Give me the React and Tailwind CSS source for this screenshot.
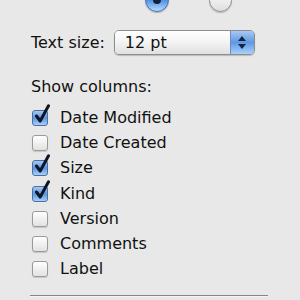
const columns = [
  { label: 'Date Modified', checked: true },
  { label: 'Date Created', checked: false },
  { label: 'Size', checked: true },
  { label: 'Kind', checked: true },
  { label: 'Version', checked: false },
  { label: 'Comments', checked: false },
  { label: 'Label', checked: false },
];

const Radio = ({ selected }) =>
  selected ? (
    <div className="w-[24px] h-[24px] rounded-full border border-[#3f6fae] bg-gradient-to-b from-[#8fb8ee] via-[#4f8ee0] to-[#b7dcff] flex items-center justify-center shadow-[0_1px_1px_rgba(0,0,0,0.25)]">
      <div className="w-[8px] h-[8px] rounded-full bg-[#12213a]" />
    </div>
  ) : (
    <div className="w-[23px] h-[23px] rounded-full border border-[#8c8c8c] bg-gradient-to-b from-[#ffffff] to-[#dedede] shadow-[0_1px_1px_rgba(0,0,0,0.2)]" />
  );

const Checkbox = ({ checked }) => (
  <div className="relative w-[16px] h-[16px]">
    {checked ? (
      <div className="w-[16px] h-[16px] rounded-[3px] border border-[#4a6fa3] bg-gradient-to-b from-[#a9c9f2] via-[#5d95de] to-[#a8d0fb]" />
    ) : (
      <div className="w-[16px] h-[16px] rounded-[3px] border border-[#9a9a9a] bg-gradient-to-b from-[#ffffff] to-[#e2e2e2] shadow-[0_1px_1px_rgba(0,0,0,0.15)]" />
    )}
    {checked && (
      <svg className="absolute left-[2px] top-[-6px]" width="17" height="21" viewBox="0 0 17 21">
        <path d="M2.5 12 L6.2 17 L14.5 1.8" fill="none" stroke="#0d1626" strokeWidth="3" strokeLinecap="round" strokeLinejoin="round" />
      </svg>
    )}
  </div>
);

export default function App() {
  return (
    <div className="w-[300px] h-[300px] overflow-hidden bg-[#e8e8e8] text-[#111111] text-[16px] font-['DejaVu_Sans',sans-serif]">
      <div className="flex gap-[40px] pl-[145px] mt-[-12px] h-[24px] items-center">
        <Radio selected />
        <Radio />
      </div>

      <div className="flex items-center h-[25px] mt-[18px] pl-[31px]">
        <span className="leading-[20px]">Text size:</span>
        <div className="ml-[9px] w-[141px] h-[25px] flex rounded-[5px] border border-[#8d8d8d] overflow-hidden shadow-[0_1px_1px_rgba(0,0,0,0.2)]">
          <div className="flex-1 flex items-center pl-[10px] bg-gradient-to-b from-[#ffffff] via-[#f3f3f3] to-[#e0e0e0]">
            12 pt
          </div>
          <div className="w-[24px] flex flex-col items-center justify-center gap-[3px] bg-gradient-to-b from-[#a7c8f3] via-[#5f98e2] to-[#a9d1fb] border-l border-[#6b8fc0]">
            <svg width="8" height="5" viewBox="0 0 8 5"><path d="M4 0 L8 5 L0 5 Z" fill="#152540" /></svg>
            <svg width="8" height="5" viewBox="0 0 8 5"><path d="M0 0 L8 0 L4 5 Z" fill="#152540" /></svg>
          </div>
        </div>
      </div>

      <div className="mt-[22px] pl-[31px] leading-[20px]">Show columns:</div>

      <div className="mt-[8px] flex flex-col">
        {columns.map((c) => (
          <div key={c.label} className="flex items-center h-[25.3px] pl-[32px] gap-[12px]">
            <Checkbox checked={c.checked} />
            <span className="leading-[20px]">{c.label}</span>
          </div>
        ))}
      </div>

      <div className="mt-[13px] ml-[30px] w-[238px] border-t border-[#858585] border-b border-b-[#f4f4f4]" />
    </div>
  );
}
